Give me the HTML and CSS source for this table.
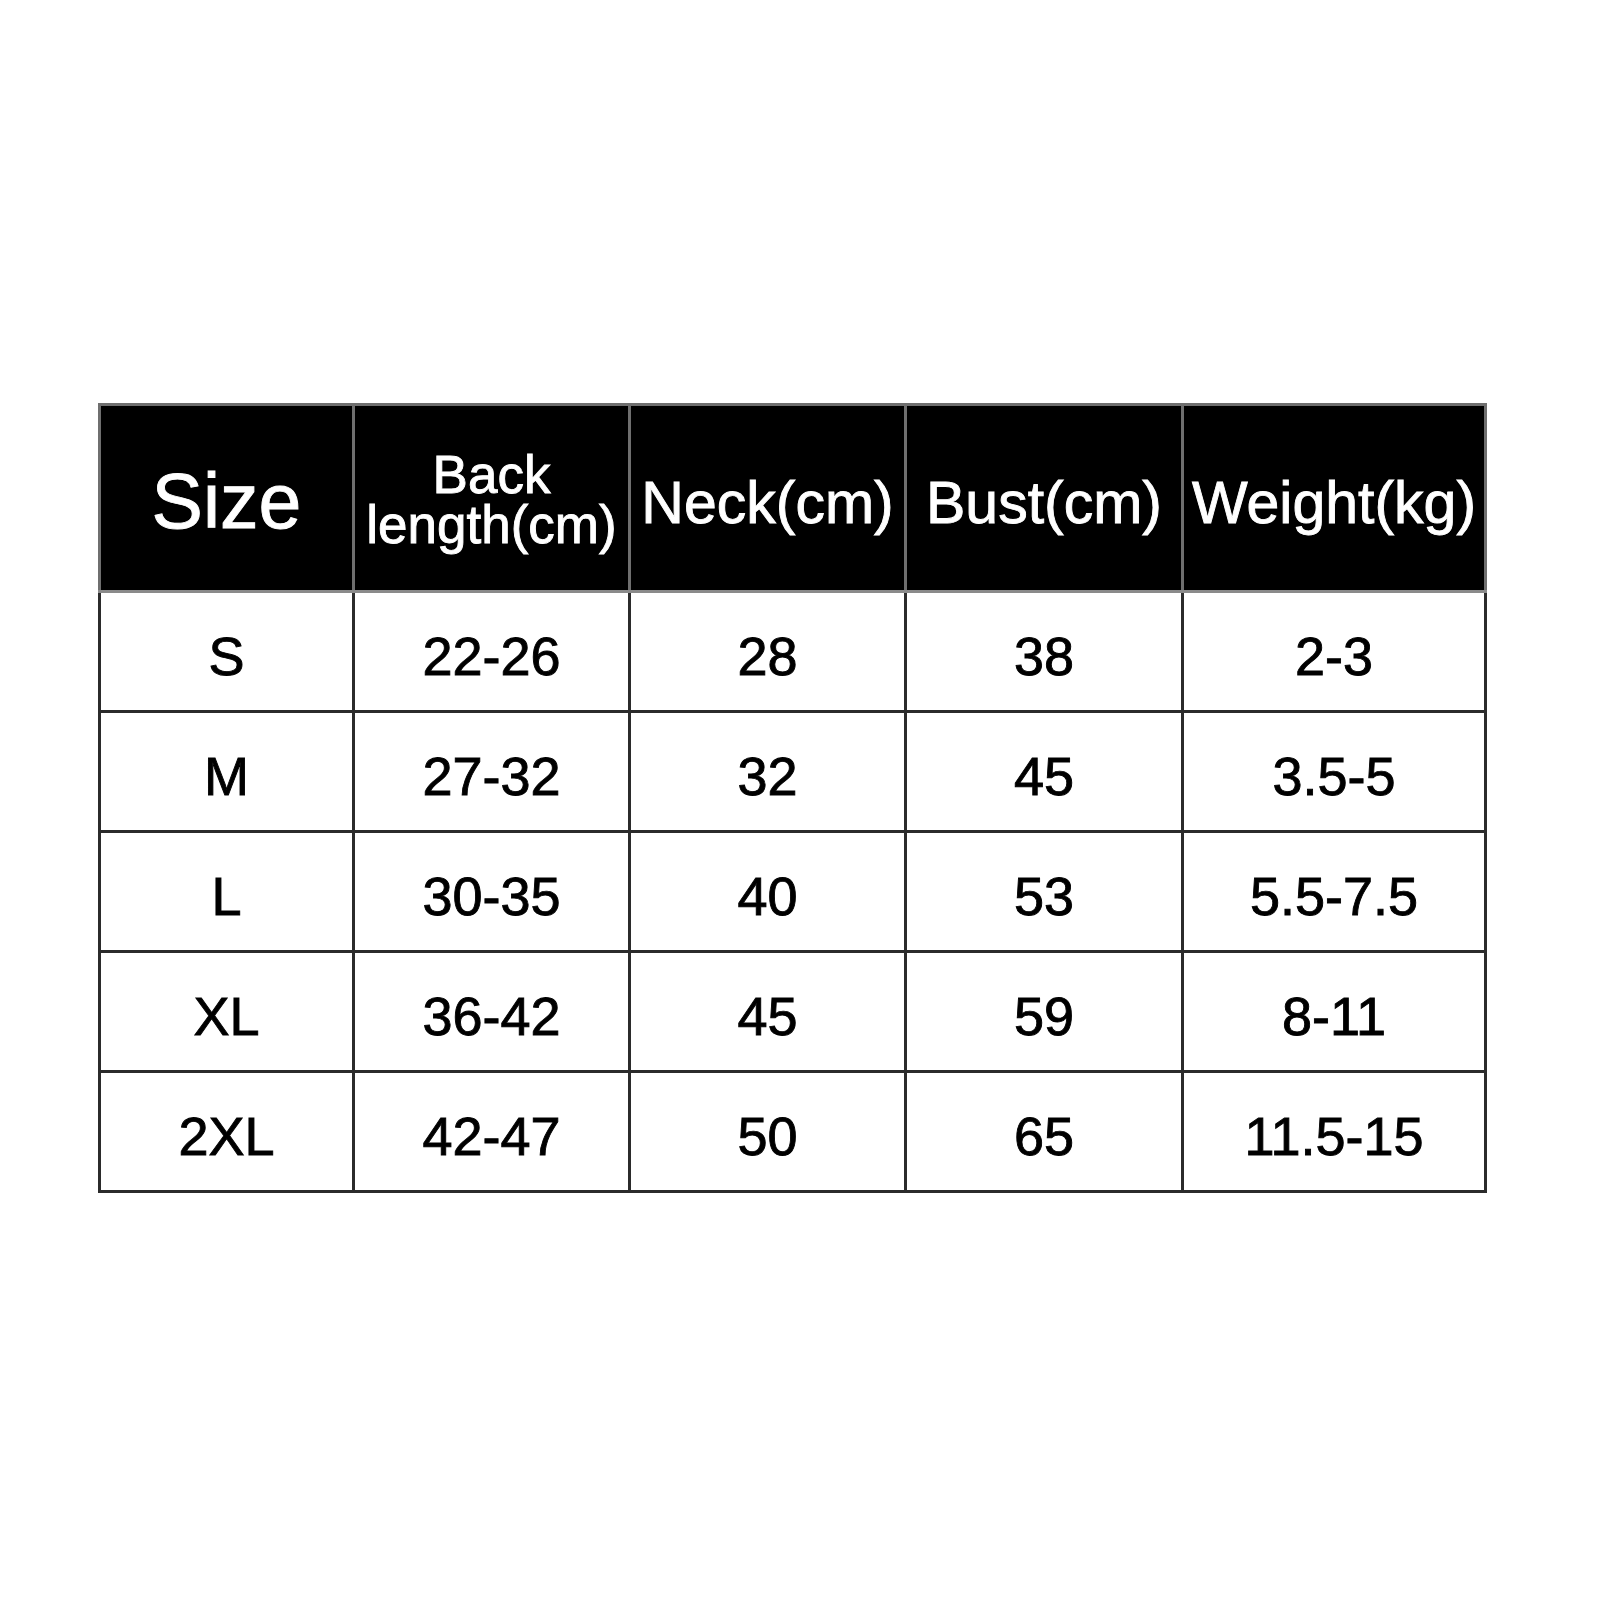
FILE: index.html
```html
<!DOCTYPE html>
<html>
<head>
<meta charset="utf-8">
<link rel="stylesheet" href="styles.css">
</head>
<body>
<div class="page">
  <table class="sizes">
    <colgroup>
      <col class="c1"><col class="c2"><col class="c3"><col class="c4"><col class="c5">
    </colgroup>
    <thead>
      <tr>
        <th class="big">Size</th>
        <th class="two"><span class="ln">Back</span><span class="ln">length(cm)</span></th>
        <th>Neck(cm)</th>
        <th>Bust(cm)</th>
        <th>Weight(kg)</th>
      </tr>
    </thead>
    <tbody>
      <tr><td>S</td><td>22-26</td><td>28</td><td>38</td><td>2-3</td></tr>
      <tr><td>M</td><td>27-32</td><td>32</td><td>45</td><td>3.5-5</td></tr>
      <tr><td>L</td><td>30-35</td><td>40</td><td>53</td><td>5.5-7.5</td></tr>
      <tr><td>XL</td><td>36-42</td><td>45</td><td>59</td><td>8-11</td></tr>
      <tr><td>2XL</td><td>42-47</td><td>50</td><td>65</td><td>11.5-15</td></tr>
    </tbody>
  </table>
</div>
</body>
</html>
```
FILE: styles.css
```css
html, body {
  margin: 0;
  padding: 0;
  background: #ffffff;
}
.page {
  width: 1600px;
  height: 1600px;
  padding: 403px 0 0 98px;
  box-sizing: border-box;
  font-family: "Liberation Sans", Arial, sans-serif;
}
.sizes {
  border-collapse: collapse;
  table-layout: fixed;
  width: 1386px;
}
.c1 { width: 254px; }
.c2 { width: 276px; }
.c3 { width: 276px; }
.c4 { width: 277px; }
.c5 { width: 303px; }
.sizes th {
  background: #000000;
  color: #ffffff;
  font-weight: normal;
  font-size: 59px;
  height: 187px;
  padding: 10px 0 0 0;
  box-sizing: border-box;
  text-align: center;
  vertical-align: middle;
  border: 3px solid #6f6f6f;
  border-bottom-color: #8a8a8a;
  white-space: nowrap;
  line-height: 1.1;
  -webkit-text-stroke: 0.9px #ffffff;
}
.sizes th.big {
  font-size: 77px;
  padding-top: 6px;
}
.sizes th.two {
  font-size: 53px;
  line-height: 50px;
  padding-top: 4px;
}
.ln {
  display: block;
}
.sizes td {
  color: #000000;
  font-size: 54px;
  height: 120px;
  padding: 8px 0 0 0;
  box-sizing: border-box;
  text-align: center;
  vertical-align: middle;
  border: 3px solid #2b2b2b;
  line-height: 1;
  -webkit-text-stroke: 0.9px #000000;
}
```
